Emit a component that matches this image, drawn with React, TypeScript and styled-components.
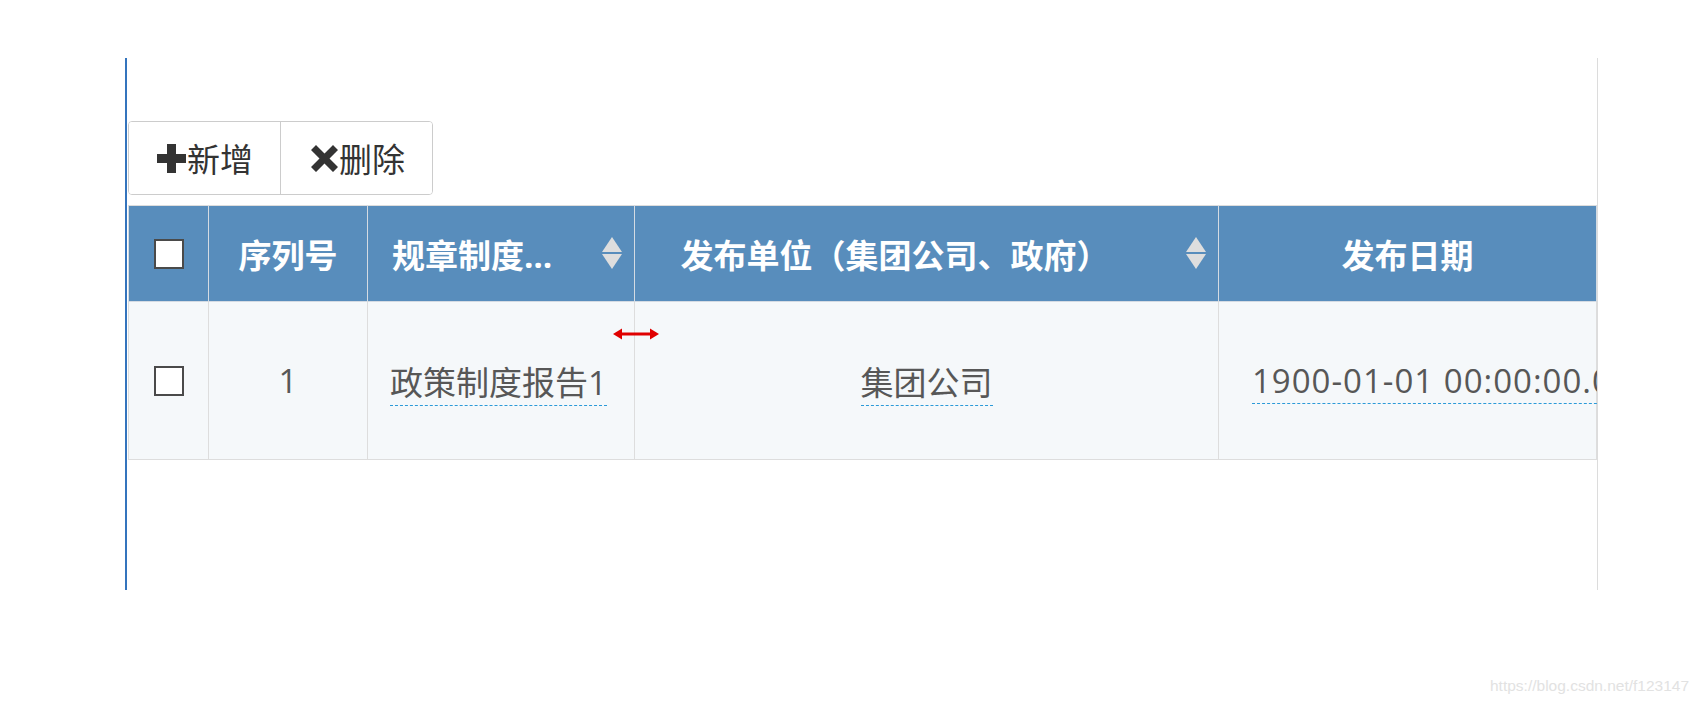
import React from 'react';
import styled, { createGlobalStyle } from 'styled-components';

const GlobalStyle = createGlobalStyle`
  html, body {
    margin: 0;
    padding: 0;
    background: #fff;
  }
  body {
    font-family: "Open Sans", "Noto Sans CJK SC", sans-serif;
  }
`;

const Page = styled.div`
  position: relative;
  width: 1702px;
  height: 706px;
  padding-top: 58px;
  box-sizing: border-box;
`;

const Panel = styled.div`
  margin-left: 125px;
  width: 1473px;
  height: 532px;
  box-sizing: border-box;
  border-left: 2px solid #3474bd;
  border-right: 1px solid #dcdcdc;
  padding: 63px 0 0 1px;
  overflow: hidden;
`;

const Toolbar = styled.div`
  display: flex;
  margin-bottom: 10px;
`;

const ButtonGroup = styled.div`
  display: inline-flex;
  border: 1px solid #ccc;
  border-radius: 4px;
  overflow: hidden;
`;

const ToolButton = styled.button`
  display: flex;
  align-items: center;
  height: 72px;
  padding: 0 27px;
  border: none;
  background: #fff;
  font-family: inherit;
  font-size: 33px;
  color: #333;
  cursor: pointer;

  & + & {
    border-left: 1px solid #ccc;
    padding: 0 27px 0 29px;
  }
`;

const ToolIcon = styled.svg`
  display: block;
  flex: none;
`;

const TableWrap = styled.div`
  position: relative;
  width: 1468px;
`;

const Table = styled.table`
  border-collapse: collapse;
  table-layout: fixed;
  width: 1468px;
`;

const HeadCell = styled.th<{ $padL: number; $padR: number }>`
  height: 96px;
  box-sizing: border-box;
  background: #588dbc;
  border: 1px solid #d4dbe3;
  border-top-color: #dddddd;
  padding: 0 ${(p) => p.$padR}px 0 ${(p) => p.$padL}px;
  color: #fff;
  font-size: 33px;
  font-weight: 700;
  white-space: nowrap;
`;

const HeadInner = styled.div`
  display: flex;
  align-items: center;
  justify-content: center;
`;

const HeadLabel = styled.span<{ $align: string; $gap: number }>`
  flex: 1;
  min-width: 0;
  overflow: hidden;
  text-align: ${(p) => p.$align};
  margin-right: ${(p) => p.$gap}px;
`;

const SortIcon = styled.svg`
  display: block;
  flex: none;
`;

const BodyCell = styled.td<{ $align: string; $padL: number; $spacing?: number }>`
  height: 158px;
  box-sizing: border-box;
  background: #f5f8fa;
  border: 1px solid #dddddd;
  padding: 0 0 0 ${(p) => p.$padL}px;
  text-align: ${(p) => p.$align};
  color: #575757;
  font-size: 33px;
  letter-spacing: ${(p) => p.$spacing ?? 0}px;
  white-space: nowrap;
  overflow: visible;
`;

const Editable = styled.span`
  border-bottom: 1px dashed #2b9ad8;
  padding-bottom: 0;
`;

const Check = styled.input`
  appearance: none;
  display: block;
  margin: 0 auto;
  width: 30px;
  height: 30px;
  box-sizing: border-box;
  border: 2px solid #4a4a4a;
  background: #fff;
`;

const ResizeCursor = styled.svg`
  position: absolute;
  left: 485px;
  top: 123px;
  pointer-events: none;
`;

const Watermark = styled.div`
  position: absolute;
  left: 1490px;
  top: 677px;
  font-family: "Liberation Sans", Arial, sans-serif;
  font-size: 15.5px;
  color: #e2e2e2;
`;

const Sort = () => (
  <SortIcon width="20" height="33" viewBox="0 0 20 33">
    <path d="M10 0 L20 15 H0 Z" fill="#dedede" />
    <path d="M0 17 H20 L10 32 Z" fill="#dedede" />
  </SortIcon>
);

const App: React.FC = () => (
  <Page>
    <GlobalStyle />
    <Panel>
      <Toolbar>
        <ButtonGroup>
          <ToolButton>
            <ToolIcon width="31" height="31" viewBox="0 0 31 31">
              <path d="M11 1 H20 V11 H30 V20 H20 V30 H11 V20 H1 V11 H11 Z" fill="#333" />
            </ToolIcon>
            新增
          </ToolButton>
          <ToolButton>
            <ToolIcon width="29" height="29" viewBox="0 0 29 29">
              <path
                d="M6 1 L14.5 9.5 L23 1 L28 6 L19.5 14.5 L28 23 L23 28 L14.5 19.5 L6 28 L1 23 L9.5 14.5 L1 6 Z"
                fill="#333"
              />
            </ToolIcon>
            删除
          </ToolButton>
        </ButtonGroup>
      </Toolbar>

      <TableWrap>
        <Table>
          <colgroup>
            <col style={{ width: 80 }} />
            <col style={{ width: 159 }} />
            <col style={{ width: 267 }} />
            <col style={{ width: 584 }} />
            <col style={{ width: 378 }} />
          </colgroup>
          <thead>
            <tr>
              <HeadCell $padL={0} $padR={0}>
                <Check type="checkbox" />
              </HeadCell>
              <HeadCell $padL={24} $padR={24}>
                <HeadInner>
                  <HeadLabel $align="center" $gap={0}>序列号</HeadLabel>
                </HeadInner>
              </HeadCell>
              <HeadCell $padL={24} $padR={12}>
                <HeadInner>
                  <HeadLabel $align="left" $gap={20}>规章制度…</HeadLabel>
                  <Sort />
                </HeadInner>
              </HeadCell>
              <HeadCell $padL={24} $padR={12}>
                <HeadInner>
                  <HeadLabel $align="center" $gap={55}>发布单位（集团公司、政府）</HeadLabel>
                  <Sort />
                </HeadInner>
              </HeadCell>
              <HeadCell $padL={24} $padR={24}>
                <HeadInner>
                  <HeadLabel $align="center" $gap={0}>发布日期</HeadLabel>
                </HeadInner>
              </HeadCell>
            </tr>
          </thead>
          <tbody>
            <tr>
              <BodyCell $align="center" $padL={0}>
                <Check type="checkbox" />
              </BodyCell>
              <BodyCell $align="center" $padL={0}>1</BodyCell>
              <BodyCell $align="left" $padL={22}>
                <Editable>政策制度报告1</Editable>
              </BodyCell>
              <BodyCell $align="center" $padL={0}>
                <Editable>集团公司</Editable>
              </BodyCell>
              <BodyCell $align="left" $padL={33} $spacing={1}>
                <Editable>1900-01-01 00:00:00.0</Editable>
              </BodyCell>
            </tr>
          </tbody>
        </Table>
        <ResizeCursor width="46" height="12" viewBox="0 0 46 12">
          <path d="M0 6 L9 0.5 V11.5 Z" fill="#e00000" />
          <path d="M46 6 L37 0.5 V11.5 Z" fill="#e00000" />
          <rect x="6" y="4.5" width="34" height="3" fill="#e00000" />
        </ResizeCursor>
      </TableWrap>
    </Panel>
    <Watermark>https://blog.csdn.net/f123147</Watermark>
  </Page>
);

export default App;
